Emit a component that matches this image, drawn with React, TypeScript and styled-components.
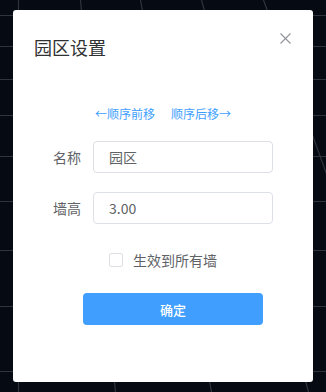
import React from "react";
import styled, { createGlobalStyle } from "styled-components";

const GlobalStyle = createGlobalStyle`
  html, body { margin: 0; padding: 0; }
  body {
    background: #050a13;
    font-family: "Noto Sans CJK SC", "Noto Sans", sans-serif;
  }
  * { box-sizing: border-box; }
`;

const Stage = styled.div`
  position: relative;
  width: 326px;
  height: 392px;
  overflow: hidden;
  display: flex;
  align-items: flex-start;
  justify-content: center;
  padding-top: 10px;
`;

const GridCanvas = styled.svg`
  position: absolute;
  inset: 0;
  width: 326px;
  height: 392px;
`;

const Dialog = styled.div`
  position: relative;
  width: 300px;
  height: 372px;
  background: #fff;
  border-radius: 3px;
  display: flex;
  flex-direction: column;
`;

const Header = styled.div`
  padding: 25px 20px 0 21px;
`;

const Title = styled.div`
  font-size: 18px;
  line-height: 24px;
  color: #303133;
`;

const CloseButton = styled.button`
  position: absolute;
  top: 18px;
  right: 18px;
  width: 20px;
  height: 20px;
  padding: 0;
  border: none;
  background: transparent;
  display: flex;
  align-items: center;
  justify-content: center;
  cursor: pointer;
`;

const OrderRow = styled.div`
  margin-top: 45px;
  display: flex;
  justify-content: center;
  gap: 16px;
  font-size: 12px;
  line-height: 20px;
`;

const OrderLink = styled.a`
  color: #409eff;
  cursor: pointer;
  text-decoration: none;
`;

const Form = styled.div`
  margin-top: 17px;
  padding: 0 20px;
  display: flex;
  flex-direction: column;
  gap: 19px;
`;

const FormRow = styled.div`
  display: flex;
  align-items: center;
  gap: 12px;
`;

const Label = styled.label`
  width: 48px;
  text-align: right;
  font-size: 14px;
  color: #606266;
  line-height: 32px;
`;

const Input = styled.input`
  width: 180px;
  height: 32px;
  border: 1px solid #dcdfe6;
  border-radius: 4px;
  padding: 0 15px;
  font-family: "Noto Sans CJK SC", "Noto Sans", sans-serif;
  font-size: 14px;
  color: #606266;
  outline: none;
`;

const CheckRow = styled.label`
  margin-top: 26px;
  display: flex;
  align-items: center;
  justify-content: center;
  gap: 10px;
  height: 20px;
  font-size: 14px;
  color: #606266;
  cursor: pointer;
`;

const CheckBox = styled.span`
  width: 14px;
  height: 14px;
  border: 1px solid #dcdfe6;
  border-radius: 2px;
  background: #fff;
`;

const Footer = styled.div`
  margin-top: 23px;
  padding-left: 70px;
`;

const PrimaryButton = styled.button`
  width: 180px;
  height: 32px;
  border: none;
  border-radius: 4px;
  background: #409eff;
  color: #fff;
  font-family: "Noto Sans CJK SC", "Noto Sans", sans-serif;
  font-size: 13px;
  font-weight: 500;
  cursor: pointer;
`;

const hLines = [15, 46, 79, 115, 156, 201, 250, 306, 371];
const vLines: [number, number][] = [
  [18, 18],
  [80, 115],
  [140, 211],
  [201, 308],
  [263, 405],
];

export default function App() {
  return (
    <>
      <GlobalStyle />
      <Stage>
        <GridCanvas viewBox="0 0 326 392">
          {hLines.map((y) => (
            <line key={`h${y}`} x1={0} y1={y + 0.5} x2={326} y2={y + 0.5} stroke="#30353d" strokeWidth={1.2} />
          ))}
          {vLines.map(([a, b]) => (
            <line key={`v${a}`} x1={a + 0.5} y1={0} x2={b + 0.5} y2={392} stroke="#30353d" strokeWidth={1.2} />
          ))}
        </GridCanvas>
        <Dialog>
          <Header>
            <Title>园区设置</Title>
          </Header>
          <CloseButton aria-label="关闭">
            <svg width="11" height="11" viewBox="0 0 11 11">
              <path d="M0.5 0.5 L10.5 10.5 M10.5 0.5 L0.5 10.5" stroke="#909399" strokeWidth="1.1" fill="none" />
            </svg>
          </CloseButton>
          <OrderRow>
            <OrderLink>←顺序前移</OrderLink>
            <OrderLink>顺序后移→</OrderLink>
          </OrderRow>
          <Form>
            <FormRow>
              <Label>名称</Label>
              <Input defaultValue="园区" />
            </FormRow>
            <FormRow>
              <Label>墙高</Label>
              <Input defaultValue="3.00" />
            </FormRow>
          </Form>
          <CheckRow>
            <CheckBox />
            <span>生效到所有墙</span>
          </CheckRow>
          <Footer>
            <PrimaryButton>确定</PrimaryButton>
          </Footer>
        </Dialog>
      </Stage>
    </>
  );
}
